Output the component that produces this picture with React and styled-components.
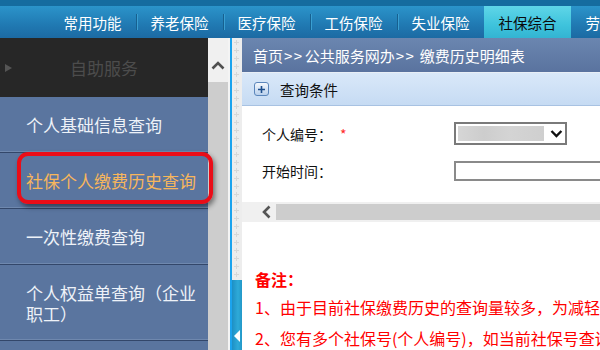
import React from 'react';
import styled, { createGlobalStyle } from 'styled-components';

const GlobalStyle = createGlobalStyle`
  html, body {
    margin: 0;
    padding: 0;
    background: #ffffff;
    overflow: hidden;
  }
  body {
    font-family: "Noto Sans CJK SC", "DejaVu Sans", sans-serif;
  }
`;

const NAV_ITEMS = ['常用功能', '养老保险', '医疗保险', '工伤保险', '失业保险', '社保综合', '劳动关系'];

const SIDE_ITEMS = [
  { text: '个人基础信息查询', height: 56 },
  { text: '社保个人缴费历史查询', height: 56, active: true },
  { text: '一次性缴费查询', height: 56 },
  { text: '个人权益单查询（企业职工）', height: 76 },
];

const Page = styled.div`
  width: 600px;
  height: 350px;
  overflow: hidden;
  display: flex;
  flex-direction: column;
`;

const TopBar = styled.div`
  height: 32px;
  border-top: 6px solid #156c9f;
  background: linear-gradient(#2b94ca, #2079b2 60%, #1c6aa3);
  display: flex;
  padding-left: 49px;
  flex-shrink: 0;
`;

const NavItem = styled.div`
  width: 87px;
  flex-shrink: 0;
  display: flex;
  align-items: center;
  justify-content: center;
  font-size: 14.5px;
  color: ${props => props.active ? '#0a0a0a' : '#ffffff'};
  background: ${props => props.active ? 'linear-gradient(#5fd6e8, #3ec3dc 60%, #33b4d2)' : 'transparent'};
  position: relative;
  &:not(:first-child)::before {
    content: '';
    position: absolute;
    left: 0;
    top: 8px;
    height: 16px;
    width: 1px;
    background: #17608f;
    box-shadow: 1px 0 0 #3a9fd2;
    display: ${props => props.active || props.afterActive ? 'none' : 'block'};
  }
`;

const Body = styled.div`
  flex: 1;
  display: flex;
  min-height: 0;
`;

const Sidebar = styled.div`
  width: 208px;
  flex-shrink: 0;
  background: #5a759f;
  position: relative;
`;

const SideHeader = styled.div`
  height: 59px;
  background: #272727;
  display: flex;
  align-items: center;
  justify-content: center;
  position: relative;
  font-size: 17px;
  color: #4c4c4c;
`;

const HeaderArrow = styled.span`
  position: absolute;
  left: 5px;
  top: 26px;
  width: 0;
  height: 0;
  border-top: 4px solid transparent;
  border-bottom: 4px solid transparent;
  border-left: 7px solid #555555;
`;

const SideItem = styled.div`
  height: ${props => props.height}px;
  box-sizing: border-box;
  border-bottom: 1px solid #33476a;
  box-shadow: inset 0 -1px 0 #6f88ae;
  padding: 0 2px 0 26px;
  display: flex;
  align-items: center;
  font-size: 17px;
  line-height: 21px;
  color: ${props => props.active ? '#f7b65c' : '#eef2f8'};
`;

const Highlight = styled.div`
  position: absolute;
  left: 17px;
  top: 114px;
  width: 188px;
  height: 44px;
  border: 4px solid #ea0d18;
  border-radius: 11px;
  box-shadow: 2px 3px 5px rgba(0, 0, 0, 0.45);
  pointer-events: none;
`;

const VScroll = styled.div`
  width: 20px;
  flex-shrink: 0;
  display: flex;
  flex-direction: column;
  background: #cdcdcd;
`;

const VScrollTop = styled.div`
  height: 44px;
  background: #f0f0f0;
  display: flex;
  align-items: center;
  justify-content: center;
  padding-top: 10px;
  box-sizing: border-box;
`;

const Gap = styled.div`
  width: 2px;
  flex-shrink: 0;
  background: #f4f4f4;
`;

const BlueLine = styled.div`
  width: 2px;
  flex-shrink: 0;
  background: #1ba3ee;
`;

const Strip = styled.div`
  width: 10px;
  flex-shrink: 0;
  display: flex;
  flex-direction: column;
`;

const StripPattern = styled.div`
  flex: 1;
  background-color: #ededed;
  background-image:
    linear-gradient(to right, #ededed 2px, transparent 2px, transparent 7px, #ededed 7px),
    linear-gradient(to bottom, #ededed 2px, transparent 2px, transparent 7px, #ededed 7px),
    linear-gradient(to bottom, transparent 4px, #d7d7d7 4px, #d7d7d7 5px, transparent 5px),
    linear-gradient(to right, transparent 4px, #d7d7d7 4px, #d7d7d7 5px, transparent 5px);
  background-size: 10px 8px;
`;

const StripFoot = styled.div`
  height: 70px;
  background: linear-gradient(to right, #1e8fc4, #2eaad8 60%, #2398c8);
  display: flex;
  align-items: flex-end;
  justify-content: center;
  padding-bottom: 8px;
  box-sizing: border-box;
`;

const FootArrow = styled.span`
  width: 0;
  height: 0;
  border-top: 6px solid transparent;
  border-bottom: 6px solid transparent;
  border-right: 6px solid #ffffff;
`;

const Main = styled.div`
  flex: 1;
  min-width: 0;
  overflow: hidden;
  display: flex;
  flex-direction: column;
  background: #ffffff;
`;

const Breadcrumb = styled.div`
  height: 34px;
  flex-shrink: 0;
  background: linear-gradient(#6b86b0, #5a739f);
  display: flex;
  align-items: center;
  padding-left: 11px;
  font-size: 15px;
  color: #ffffff;
  white-space: pre;
  border-bottom: 1px solid #e8eef6;
`;

const Arrows = styled.span`
  letter-spacing: 1.5px;
  margin: 0 1px 0 1px;
`;

const QueryBar = styled.div`
  height: 32px;
  flex-shrink: 0;
  background: linear-gradient(#d9e8f9, #c6dbf3);
  border-bottom: 1px solid #a8c2e2;
  display: flex;
  align-items: center;
  gap: 11px;
  padding-left: 12px;
  font-size: 14.5px;
  color: #111111;
`;

const PlusIcon = styled.span`
  width: 13px;
  height: 12px;
  border: 1px solid #5b86bb;
  border-radius: 3px;
  background: linear-gradient(#f4f8fd, #b9d0ec);
  display: flex;
  align-items: center;
  justify-content: center;
`;

const Form = styled.div`
  height: 96px;
  flex-shrink: 0;
  display: flex;
  flex-direction: column;
  padding: 16px 0 0 20px;
  box-sizing: border-box;
  gap: 16px;
`;

const FormRow = styled.div`
  display: grid;
  grid-template-columns: 192px auto;
  align-items: center;
  font-size: 14px;
  color: #111111;
  white-space: nowrap;
`;

const Star = styled.span`
  color: #ff2a2a;
  margin-left: 8px;
`;

const Select = styled.div`
  width: 113px;
  height: 23px;
  box-sizing: border-box;
  border: 2px solid #7a7a7a;
  background: #ffffff;
  display: flex;
  align-items: center;
  padding: 2px;
  gap: 6px;
`;

const Blurred = styled.div`
  width: 87px;
  height: 15px;
  background: linear-gradient(to right, #d6d6d6, #cdcdcd 30%, #d4d4d4 60%, #cfcfcf);
`;

const TextInput = styled.div`
  width: 200px;
  height: 20px;
  box-sizing: border-box;
  border: 2px solid #8a8a8a;
  border-right: none;
  background: #ffffff;
`;

const HScroll = styled.div`
  height: 20px;
  flex-shrink: 0;
  background: #f0f0f0;
  display: flex;
  align-items: center;
  padding-left: 20px;
  gap: 5px;
`;

const HThumb = styled.div`
  flex: 1;
  height: 16px;
  background: #cdcdcd;
`;

const Notes = styled.div`
  padding: 44px 0 0 13px;
  color: #ff0000;
  white-space: nowrap;
`;

const NoteTitle = styled.div`
  font-size: 16px;
  font-weight: bold;
  line-height: 26px;
`;

const NoteLine = styled.div`
  font-size: 16px;
  line-height: 31px;
`;

function ChevronUp() {
  return (
    <svg width="14" height="9" viewBox="0 0 14 9">
      <path d="M1.5 7.5 L7 2 L12.5 7.5" fill="none" stroke="#505050" strokeWidth="2.6" />
    </svg>
  );
}

function ChevronDown() {
  return (
    <svg width="13" height="9" viewBox="0 0 13 9">
      <path d="M1.5 2 L6.5 7 L11.5 2" fill="none" stroke="#101010" strokeWidth="2.4" />
    </svg>
  );
}

function ChevronLeft() {
  return (
    <svg width="9" height="14" viewBox="0 0 9 14">
      <path d="M7.5 1.5 L2 7 L7.5 12.5" fill="none" stroke="#555555" strokeWidth="2.6" />
    </svg>
  );
}

function Plus() {
  return (
    <svg width="9" height="9" viewBox="0 0 9 9">
      <path d="M4.5 1 V8 M1 4.5 H8" stroke="#1e4f8c" strokeWidth="1.6" />
    </svg>
  );
}

export default function App() {
  const activeIndex = NAV_ITEMS.indexOf('社保综合');

  return (
    <Page>
      <GlobalStyle />
      <TopBar>
        {NAV_ITEMS.map((item, i) => (
          <NavItem key={item} active={i === activeIndex} afterActive={i === activeIndex + 1}>
            {item}
          </NavItem>
        ))}
      </TopBar>
      <Body>
        <Sidebar>
          <SideHeader>
            <HeaderArrow />
            自助服务
          </SideHeader>
          {SIDE_ITEMS.map(item => (
            <SideItem key={item.text} height={item.height} active={item.active}>
              {item.text}
            </SideItem>
          ))}
          <Highlight />
        </Sidebar>
        <VScroll>
          <VScrollTop>
            <ChevronUp />
          </VScrollTop>
        </VScroll>
        <Gap />
        <BlueLine />
        <Strip>
          <StripPattern />
          <StripFoot>
            <FootArrow />
          </StripFoot>
        </Strip>
        <Main>
          <Breadcrumb>
            首页<Arrows>&gt;&gt;</Arrows>公共服务网办<Arrows>&gt;&gt;</Arrows> 缴费历史明细表
          </Breadcrumb>
          <QueryBar>
            <PlusIcon><Plus /></PlusIcon>
            查询条件
          </QueryBar>
          <Form>
            <FormRow>
              <span>个人编号：<Star>*</Star></span>
              <Select>
                <Blurred />
                <ChevronDown />
              </Select>
            </FormRow>
            <FormRow>
              <span>开始时间：</span>
              <TextInput />
            </FormRow>
          </Form>
          <HScroll>
            <ChevronLeft />
            <HThumb />
          </HScroll>
          <Notes>
            <NoteTitle>备注：</NoteTitle>
            <NoteLine>1、由于目前社保缴费历史的查询量较多，为减轻系统压力</NoteLine>
            <NoteLine>2、您有多个社保号(个人编号)，如当前社保号查询不到</NoteLine>
          </Notes>
        </Main>
      </Body>
    </Page>
  );
}
